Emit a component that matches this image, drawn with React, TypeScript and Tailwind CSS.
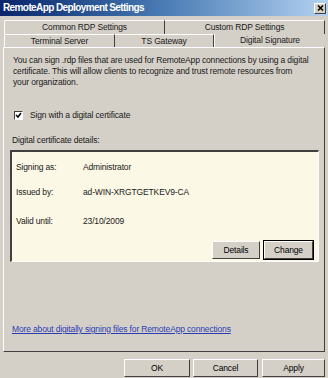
import React from "react";

const font = { fontFamily: '"Liberation Sans", Arial, sans-serif' };

function Btn({ label, w, pressed }: { label: string; w: string; pressed?: boolean }) {
  return (
    <div
      className={`${w} h-[18px] flex items-center justify-center text-black bg-[#d4d0c8] border border-t-white border-l-white border-r-[#404040] border-b-[#404040] ${pressed ? "outline outline-1 outline-black" : ""}`}
    >
      {label}
    </div>
  );
}

export default function App() {
  return (
    <div
      className="w-[328px] h-[378px] bg-[#d4d0c8] overflow-hidden flex flex-col text-[8.5px] tracking-[-0.15px] text-[#1a1a1a]"
      style={font}
    >
      {/* Title bar */}
      <div className="h-[16px] shrink-0 flex items-center justify-between pl-[3px] pr-[2px] bg-gradient-to-r from-[#0a246a] via-[#4a7cb5] to-[#b4d2f0]">
        <span className="text-white font-bold text-[10px] tracking-[-0.6px] leading-none">
          RemoteApp Deployment Settings
        </span>
        <div className="w-[12px] h-[11px] bg-[#d4d0c8] border border-t-white border-l-white border-r-[#404040] border-b-[#404040] flex items-center justify-center">
          <svg width="7" height="6" viewBox="0 0 7 6">
            <path d="M1 0.5 L6 5.5 M6 0.5 L1 5.5" stroke="black" strokeWidth="1.5" />
          </svg>
        </div>
      </div>

      {/* Tabs */}
      <div className="mt-[4px] pl-[4px] pr-[3px] flex flex-col">
        <div className="flex h-[14px]">
          <div className="w-[161px] flex items-center justify-center border-t border-l border-t-white border-l-white border-r border-r-[#404040] rounded-tl-[2px]">
            Common RDP Settings
          </div>
          <div className="flex-1 flex items-center justify-center border-t border-t-white border-r border-r-[#404040]">
            Custom RDP Settings
          </div>
        </div>
        <div className="flex h-[13px]">
          <div className="w-[111px] flex items-center justify-center border-t border-l border-t-white border-l-white border-r border-r-[#404040]">
            Terminal Server
          </div>
          <div className="w-[99px] flex items-center justify-center border-t border-t-white border-r border-r-[#404040]">
            TS Gateway
          </div>
          <div className="flex-1 flex items-center justify-center border-l border-l-white">
            Digital Signature
          </div>
        </div>
      </div>

      {/* Panel */}
      <div className="mx-[3px] h-[305px] border border-t-white border-l-white border-r-[#404040] border-b-[#404040] flex flex-col pl-[6px] pr-[5px] pt-[7px]">
        <p className="leading-[11px] pl-[3px] pr-[10px]">
          You can sign .rdp files that are used for RemoteApp connections by using a digital certificate. This will allow clients to recognize and trust remote resources from your organization.
        </p>
        <div className="mt-[22px] h-[11px] flex items-center gap-[7px] pl-[4px]">
          <div className="w-[9px] h-[9px] bg-white border border-t-[#404040] border-l-[#404040] border-r-white border-b-white flex items-center justify-center">
            <svg width="7" height="7" viewBox="0 0 7 7">
              <path d="M1 3 L3 5 L6 1" stroke="black" strokeWidth="1.5" fill="none" />
            </svg>
          </div>
          <span>Sign with a digital certificate</span>
        </div>
        <div className="mt-[13px] leading-[12px] pl-[2px]">Digital certificate details:</div>
        <div className="mt-[4px] h-[112px] bg-[#fcf8e6] border-t-2 border-l-2 border-t-[#404040] border-l-[#404040] border-r border-b border-r-white border-b-white flex flex-col pl-[4px] pr-[5px] pt-[9px]">
          <div className="flex leading-[12px]">
            <span className="w-[67px]">Signing as:</span>
            <span>Administrator</span>
          </div>
          <div className="flex mt-[13px] leading-[12px]">
            <span className="w-[67px]">Issued by:</span>
            <span>ad-WIN-XRGTGETKEV9-CA</span>
          </div>
          <div className="flex mt-[17px] leading-[12px]">
            <span className="w-[67px]">Valid until:</span>
            <span>23/10/2009</span>
          </div>
          <div className="mt-[14px] flex justify-end gap-[4px]">
            <Btn label="Details" w="w-[48px]" />
            <Btn label="Change" w="w-[49px]" pressed />
          </div>
        </div>
        <div className="mt-auto mb-[16px] leading-[12px] pl-[2px]">
          <span className="text-[#2a3db5] underline">More about digitally signing files for RemoteApp connections</span>
        </div>
      </div>

      {/* Bottom buttons */}
      <div className="mt-[7px] flex justify-end pr-[3px]">
        <Btn label="OK" w="w-[66px]" />
        <div className="w-[3px]" />
        <Btn label="Cancel" w="w-[65px]" />
        <div className="w-[4px]" />
        <Btn label="Apply" w="w-[63px]" />
      </div>
    </div>
  );
}
